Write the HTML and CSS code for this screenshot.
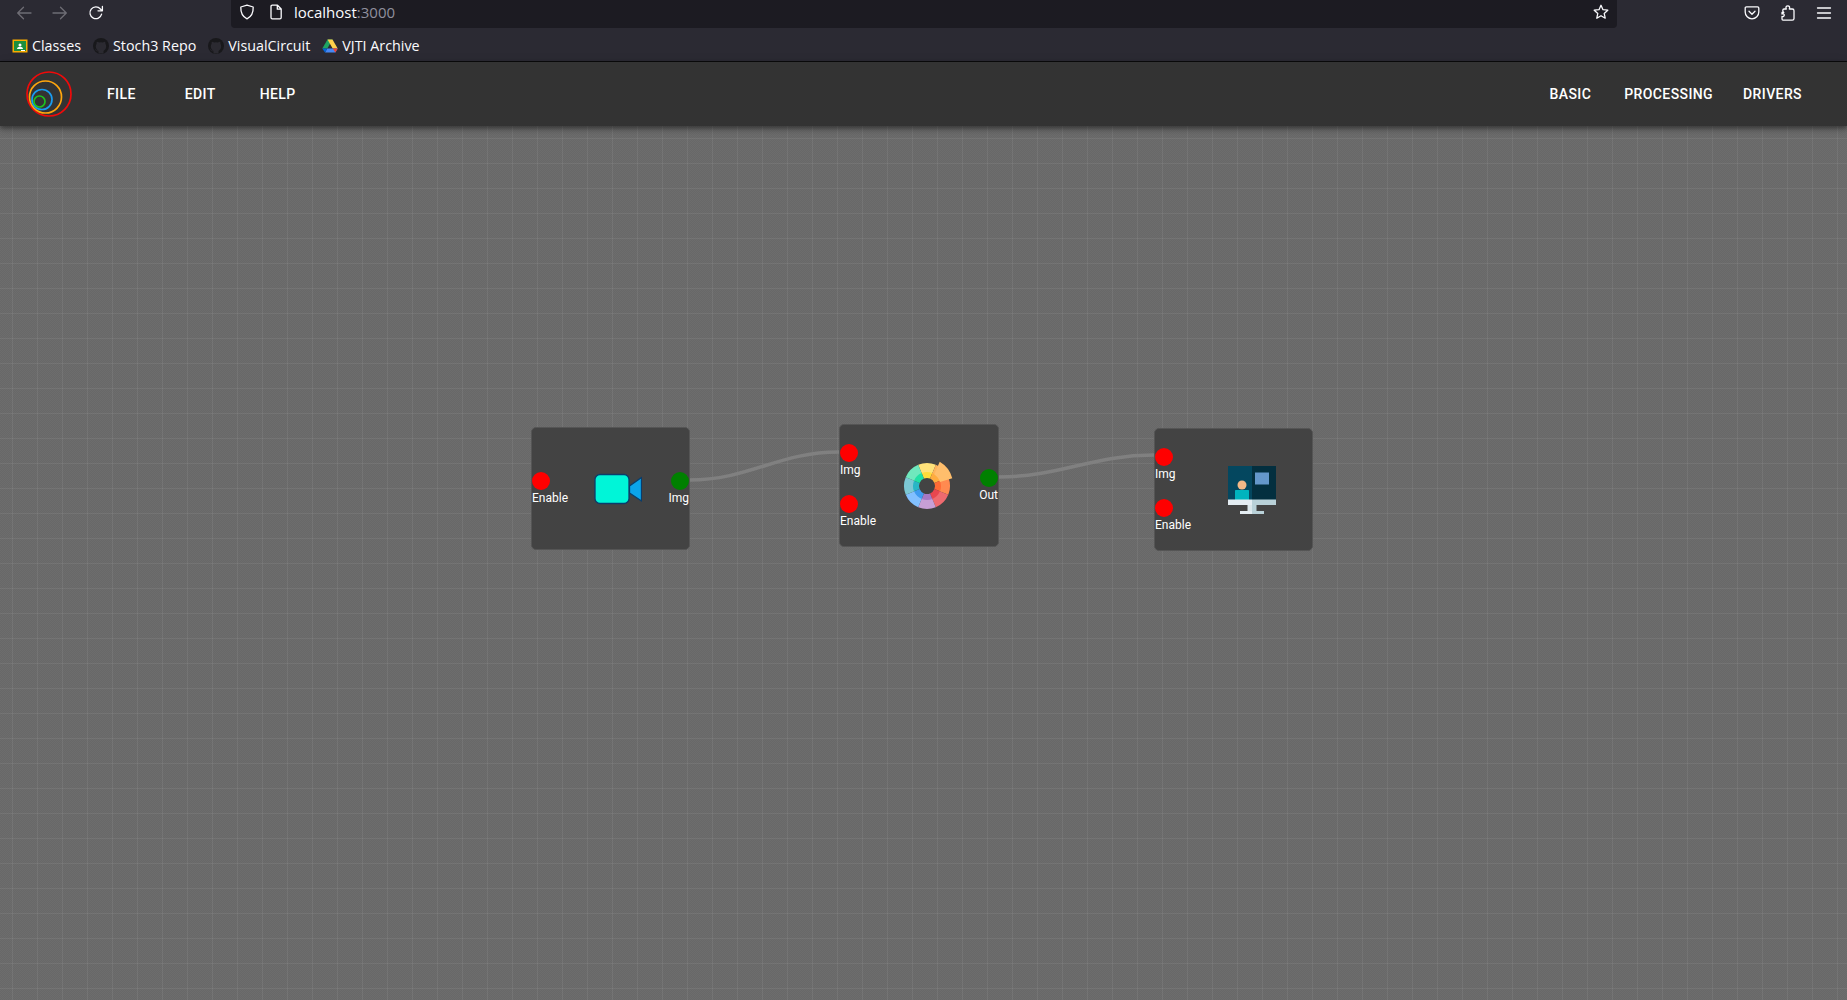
FILE: index.html
```html
<!DOCTYPE html>
<html lang="en">
<head>
    <meta charset="UTF-8">
    <title>VisualCircuit</title>
    <link rel="stylesheet" href="styles.css">
</head>

<body>
    <!-- Browser toolbar -->
    <div class="toolbar">
        <button class="tool dim">
            <svg width="16" height="16" viewBox="0 0 16 16"><path d="M15 8H2M7.5 2.2 1.7 8l5.8 5.8"/></svg>
        </button>
        <button class="tool dim">
            <svg width="16" height="16" viewBox="0 0 16 16"><path d="M1 8h13M8.5 2.2 14.3 8l-5.8 5.8"/></svg>
        </button>
        <button class="tool">
            <svg width="16" height="16" viewBox="0 0 16 16"><path d="M13.6 9.2A5.9 5.9 0 1 1 12.4 4L14 5.6M14.4 1.4v4.4H10"/></svg>
        </button>
        <div class="urlbar">
            <svg class="url-icon" width="16" height="16" viewBox="0 0 16 16"><path d="M8 1.2 14.2 3c.2 5.700-1.700 9.700-6.200 11.800C3.500 12.700 1.600 8.700 1.800 3z"/></svg>
            <svg class="url-icon" width="16" height="16" viewBox="0 0 16 16"><path d="M3 2.500C3 1.700 3.500 1.200 4.300 1.200H9.500L13.200 5V13.500C13.200 14.300 12.700 14.800 11.900 14.800H4.300C3.500 14.800 3 14.300 3 13.500zM9.300 1.400V5.200H13"/></svg>
            <span class="url-text">localhost<span class="url-port">:3000</span></span>
            <svg class="url-star" width="16" height="16" viewBox="0 0 16 16"><path d="M8 1.300 10 5.700 14.800 6.200 11.200 9.400 12.200 14.200 8 11.700 3.800 14.200 4.800 9.400 1.200 6.200 6 5.700z"/></svg>
        </div>
        <button class="tool">
            <svg width="16" height="16" viewBox="0 0 16 16"><path d="M2.500 1.800H13.500C14.300 1.800 14.800 2.300 14.800 3.100V7A6.800 6.800 0 0 1 1.200 7V3.100C1.200 2.300 1.700 1.800 2.500 1.800zM5 6.200 8 9.200 11 6.200"/></svg>
        </button>
        <button class="tool">
            <svg width="16" height="16" viewBox="0 0 16 16"><path d="M2 7.500H3.800C2.200 6.200 2.600 4 4 4H6.300C5.400 2 6.400.8 7.800.8S10.200 2 9.300 4H12.300C13.300 4 14 4.700 14 5.700V13.500C14 14.500 13.300 15.200 12.300 15.200H3C2.300 15.200 2 14.800 2 14.100V11.500C5 12 5 8 2 9z"/></svg>
        </button>
        <button class="tool">
            <svg width="16" height="16" viewBox="0 0 16 16"><path d="M1.500 3h13M1.500 8h13M1.500 13h13"/></svg>
        </button>
    </div>

    <!-- Bookmarks -->
    <div class="bookmarks">
        <a class="bookmark">
            <svg width="16" height="16" viewBox="0 0 16 16">
                <rect x="0.500" y="1.500" width="15" height="13" fill="#f9ab00"/>
                <rect x="2" y="3" width="12" height="10" fill="#1e8e3e"/>
                <circle cx="8" cy="7" r="1.500" fill="#fff"/>
                <path d="M5 11c0-3 6-3 6 0z" fill="#fff"/>
                <rect x="9" y="12" width="4" height="1" fill="#fff"/>
            </svg>
            Classes
        </a>
        <a class="bookmark">
            <svg width="16" height="16" viewBox="0 0 16 16">
                <circle cx="8" cy="8" r="8" fill="#18181b"/>
                <path d="M5.500 15.500V13C3.800 12 2.800 10.400 2.800 8.300c0-1 .3-1.800.8-2.500-.1-.7 0-1.500.3-2.100.8 0 1.500.4 2.200.9a7 7 0 0 1 3.800 0c.7-.5 1.400-.9 2.200-.9.300.6.400 1.400.3 2.100.5.700.8 1.500.8 2.500 0 2.100-1 3.700-2.700 4.700v2.500z" fill="#2b2a31"/>
                <path d="M2 11.500c1 .2 1.500 1.500 3.500 1.500" fill="none" stroke="#2b2a31" stroke-width=".8"/>
            </svg>
            Stoch3 Repo
        </a>
        <a class="bookmark">
            <svg width="16" height="16" viewBox="0 0 16 16">
                <circle cx="8" cy="8" r="8" fill="#18181b"/>
                <path d="M5.500 15.500V13C3.800 12 2.800 10.400 2.800 8.300c0-1 .3-1.800.8-2.500-.1-.7 0-1.500.3-2.100.8 0 1.500.4 2.200.9a7 7 0 0 1 3.800 0c.7-.5 1.400-.9 2.200-.9.300.6.400 1.400.3 2.100.5.700.8 1.500.8 2.500 0 2.100-1 3.700-2.700 4.700v2.500z" fill="#2b2a31"/>
                <path d="M2 11.500c1 .2 1.500 1.500 3.500 1.500" fill="none" stroke="#2b2a31" stroke-width=".8"/>
            </svg>
            VisualCircuit
        </a>
        <a class="bookmark">
            <svg width="16" height="16" viewBox="0 0 16 16">
                <path d="M5.500 1.500h5L5.300 10.500H.3z" fill="#1fa463"/>
                <path d="M10.500 1.500 15.700 10.500h-5L5.500 1.500z" fill="#ffd04b"/>
                <path d="M3 14.500 5.300 10.500h10.400l-2.300 4z" fill="#4687f4"/>
                <path d="M.3 10.500h5L3 14.500z" fill="#0066da"/>
                <path d="M15.700 10.500h-5l2.700 4z" fill="#ea4335"/>
            </svg>
            VJTI Archive
        </a>
    </div>

    <!-- App header -->
    <div class="appbar">
        <svg class="logo" width="50" height="50" viewBox="0 0 50 50">
            <circle cx="25" cy="25" r="22" stroke="#f00a0a"/>
            <circle cx="21.500" cy="28" r="16" stroke="#ffa60d"/>
            <circle cx="18" cy="30.500" r="10" stroke="#1a9cf0"/>
            <circle cx="15.500" cy="32.500" r="5.500" stroke="#1fc01f"/>
        </svg>
        <div class="menu menu-left">
            <a>File</a>
            <a>Edit</a>
            <a>Help</a>
        </div>
        <div class="menu menu-right">
            <a>Basic</a>
            <a>Processing</a>
            <a>Drivers</a>
        </div>
    </div>

    <!-- Editor canvas -->
    <div class="canvas">
        <svg class="wires" width="1847" height="874">
            <path d="M689 354C750 354 778 326 839 326"/>
            <path d="M998 351C1060 351 1092 329 1154 329"/>
        </svg>

        <div class="node node-camera">
            <div class="ports">
                <div class="port"><span class="dot in"></span>Enable</div>
            </div>
            <div class="node-icon">
                <svg width="48" height="48" viewBox="0 0 48 48">
                    <path d="M35.500 21 47.500 12.500V36L35.500 28z" fill="#0ba4ea" stroke="#0a3d6b" stroke-width="1.300" stroke-linejoin="round"/>
                    <rect x="1" y="9.500" width="34" height="29" rx="5" fill="#00f5d8" stroke="#0a3d6b" stroke-width="1.300"/>
                </svg>
            </div>
            <div class="ports ports-out">
                <div class="port"><span class="dot out"></span>Img</div>
            </div>
        </div>

        <div class="node node-color">
            <div class="ports">
                <div class="port"><span class="dot in"></span>Img</div>
                <div class="port"><span class="dot in"></span>Enable</div>
            </div>
            <div class="node-icon">
                <svg class="wheel" width="48" height="48" viewBox="0 0 48 48">
                    <g fill="none" stroke-width="10">
                        <circle cx="23" cy="24" r="18" pathLength="360" stroke-dasharray="45 315" stroke="#ffe27a" transform="rotate(-112.500 23 24)"/>
                        <circle cx="23" cy="24" r="18" pathLength="360" stroke-dasharray="45 315" stroke="#ffb45c" transform="rotate(-67.500 23 24)"/>
                        <circle cx="23" cy="24" r="18" pathLength="360" stroke-dasharray="45 315" stroke="#ff8a50" transform="rotate(-22.500 23 24)"/>
                        <circle cx="23" cy="24" r="18" pathLength="360" stroke-dasharray="45 315" stroke="#ef6a6f" transform="rotate(22.500 23 24)"/>
                        <circle cx="23" cy="24" r="18" pathLength="360" stroke-dasharray="45 315" stroke="#c79fd6" transform="rotate(67.500 23 24)"/>
                        <circle cx="23" cy="24" r="18" pathLength="360" stroke-dasharray="45 315" stroke="#82c0ff" transform="rotate(112.500 23 24)"/>
                        <circle cx="23" cy="24" r="18" pathLength="360" stroke-dasharray="45 315" stroke="#7cc8d4" transform="rotate(157.500 23 24)"/>
                        <circle cx="23" cy="24" r="18" pathLength="360" stroke-dasharray="45 315" stroke="#6fe8bd" transform="rotate(202.500 23 24)"/>
                    </g>
                    <g fill="none" stroke-width="6">
                        <circle cx="23" cy="24" r="11" pathLength="360" stroke-dasharray="45 315" stroke="#ffdc3c" transform="rotate(-112.500 23 24)"/>
                        <circle cx="23" cy="24" r="11" pathLength="360" stroke-dasharray="45 315" stroke="#ffac3f" transform="rotate(-67.500 23 24)"/>
                        <circle cx="23" cy="24" r="11" pathLength="360" stroke-dasharray="45 315" stroke="#ff6b35" transform="rotate(-22.500 23 24)"/>
                        <circle cx="23" cy="24" r="11" pathLength="360" stroke-dasharray="45 315" stroke="#e8474f" transform="rotate(22.500 23 24)"/>
                        <circle cx="23" cy="24" r="11" pathLength="360" stroke-dasharray="45 315" stroke="#a678c4" transform="rotate(67.500 23 24)"/>
                        <circle cx="23" cy="24" r="11" pathLength="360" stroke-dasharray="45 315" stroke="#3f9bef" transform="rotate(112.500 23 24)"/>
                        <circle cx="23" cy="24" r="11" pathLength="360" stroke-dasharray="45 315" stroke="#29b6c6" transform="rotate(157.500 23 24)"/>
                        <circle cx="23" cy="24" r="11" pathLength="360" stroke-dasharray="45 315" stroke="#1fe0a5" transform="rotate(202.500 23 24)"/>
                    </g>
                    <path d="M35.700-.3A27 27 0 0 1 48.300 16.300L36 20A13.500 13.500 0 0 0 30.300 12.600z" fill="#ffbe6c"/>
                </svg>
            </div>
            <div class="ports ports-out">
                <div class="port"><span class="dot out"></span>Out</div>
            </div>
        </div>

        <div class="node node-screen">
            <div class="ports">
                <div class="port"><span class="dot in"></span>Img</div>
                <div class="port"><span class="dot in"></span>Enable</div>
            </div>
            <div class="node-icon">
                <svg width="48" height="48" viewBox="0 0 48 48">
                    <rect x="0" y="0" width="24" height="34" fill="#04475f"/>
                    <rect x="24" y="0" width="24" height="34" fill="#032f3f"/>
                    <rect x="27" y="6.500" width="14" height="12" fill="#6497ca"/>
                    <circle cx="14" cy="19" r="4.500" fill="#f3b887"/>
                    <path d="M7 25c0-.6.4-1 1-1h12c.6 0 1 .4 1 1v9H7z" fill="#00b4be"/>
                    <rect x="0" y="33.500" width="24" height="5.500" fill="#e4edf2"/>
                    <rect x="24" y="33.500" width="24" height="5.500" fill="#b9d1d8"/>
                    <rect x="19.500" y="39" width="4.500" height="6" fill="#d9e6ea"/>
                    <rect x="24" y="39" width="4.500" height="6" fill="#b9d1d8"/>
                    <rect x="12" y="45" width="12" height="3" fill="#e4edf2"/>
                    <rect x="24" y="45" width="12" height="3" fill="#b9d1d8"/>
                </svg>
            </div>
        </div>
    </div>
</body>
</html>
```

FILE: styles.css
```css
* {
    box-sizing: border-box;
}

html, body {
    height: 100%;
}

body {
    margin: 0;
    display: flex;
    flex-direction: column;
    overflow: hidden;
    font-family: 'Roboto', sans-serif;
    background-color: #6a6a6a;
}

svg {
    display: block;
    flex: none;
}

/* browser chrome */
.toolbar {
    display: flex;
    height: 28px;
    padding: 0 5px 0 6px;
    background-color: #2b2a33;
}

.tool {
    display: flex;
    align-items: center;
    justify-content: center;
    width: 36px;
    height: 25px;
    padding: 0;
    border: none;
    background: none;
}

.tool svg path,
.url-icon path,
.url-star path {
    fill: none;
    stroke: #fbfbfe;
    stroke-width: 1.300;
    stroke-linejoin: round;
    stroke-linecap: round;
}

.tool.dim svg path {
    stroke: #6e6d75;
}

.urlbar {
    flex: 1;
    display: flex;
    align-items: center;
    height: 28px;
    margin: 0 117px;
    padding: 0 8px 4px 8px;
    background-color: #1c1b22;
    border-radius: 0 0 4px 4px;
}

.url-icon {
    margin-right: 13px;
}

.url-icon + .url-icon {
    margin-right: 10px;
}

.url-text {
    flex: 1;
    color: #fbfbfe;
    font-family: 'Open Sans', sans-serif;
    font-size: 15px;
}

.url-port {
    color: #8f8f9d;
}

.bookmarks {
    display: flex;
    align-items: center;
    gap: 12px;
    height: 34px;
    padding: 2px 0 0 12px;
    background-color: #2b2a33;
    border-bottom: 1px solid #0c0c0d;
    color: #fbfbfe;
    font-family: 'Open Sans', sans-serif;
    font-size: 14.300px;
}

.bookmark {
    display: flex;
    align-items: center;
    gap: 4px;
}

/* app header */
.appbar {
    position: relative;
    z-index: 2;
    display: flex;
    align-items: center;
    justify-content: space-between;
    height: 64px;
    padding-left: 24px;
    background-color: #333333;
    box-shadow: 0 2px 4px rgba(0, 0, 0, 0.3), 0 4px 5px rgba(0, 0, 0, 0.14), 0 1px 10px rgba(0, 0, 0, 0.12);
}

.logo {
    fill: none;
}

.logo circle {
    stroke-width: 1.700;
}

.menu {
    display: flex;
    color: #fff;
    font-size: 14px;
    font-weight: 500;
    letter-spacing: 0.4px;
    text-transform: uppercase;
}

.menu-left {
    flex: 1;
    gap: 49px;
    margin-left: 33px;
}

.menu-left a:last-child {
    margin-left: -5px;
}

.menu-right {
    gap: 33px;
    padding-right: 45px;
}

.menu-right a:last-child {
    margin-left: -3px;
}

/* editor */
.canvas {
    position: relative;
    flex: 1;
    background-color: #6a6a6a;
    background-image:
        linear-gradient(rgba(255, 255, 255, 0.06) 1px, transparent 1px),
        linear-gradient(90deg, rgba(255, 255, 255, 0.06) 1px, transparent 1px),
        repeating-conic-gradient(#686868 0% 25%, #6d6d6d 0% 50%);
    background-size: 25px 25px, 25px 25px, 2px 2px;
    background-position: 12px 12px, 12px 12px, 0 0;
}

.wires {
    position: absolute;
    left: 0;
    top: 0;
}

.wires path {
    fill: none;
    stroke: #808080;
    stroke-width: 3.500;
}

.node {
    position: absolute;
    display: flex;
    width: 159px;
    height: 123px;
    background-color: #434343;
    border: 1px solid #555555;
    border-radius: 5px;
    color: #fff;
    font-size: 12px;
}

.node-camera {
    left: 531px;
    top: 301px;
}

.node-color {
    left: 839px;
    top: 298px;
    width: 160px;
}

.node-screen {
    left: 1154px;
    top: 302px;
}

.ports {
    display: flex;
    flex-direction: column;
    justify-content: center;
    gap: 16px;
    padding-top: 2px;
}

.ports-out {
    align-items: flex-end;
}

.port {
    display: flex;
    flex-direction: column;
    height: 35px;
    line-height: 16px;
}

.ports-out .port {
    align-items: center;
}

.dot {
    width: 18px;
    height: 18px;
    border-radius: 50%;
}

.dot.in {
    background-color: #ff0000;
}

.dot.out {
    background-color: #008000;
}

.ports-out .dot {
    align-self: flex-end;
}

.node-icon {
    flex: 1;
    display: flex;
    align-items: center;
    justify-content: center;
}

.wheel {
    overflow: visible;
}
```
